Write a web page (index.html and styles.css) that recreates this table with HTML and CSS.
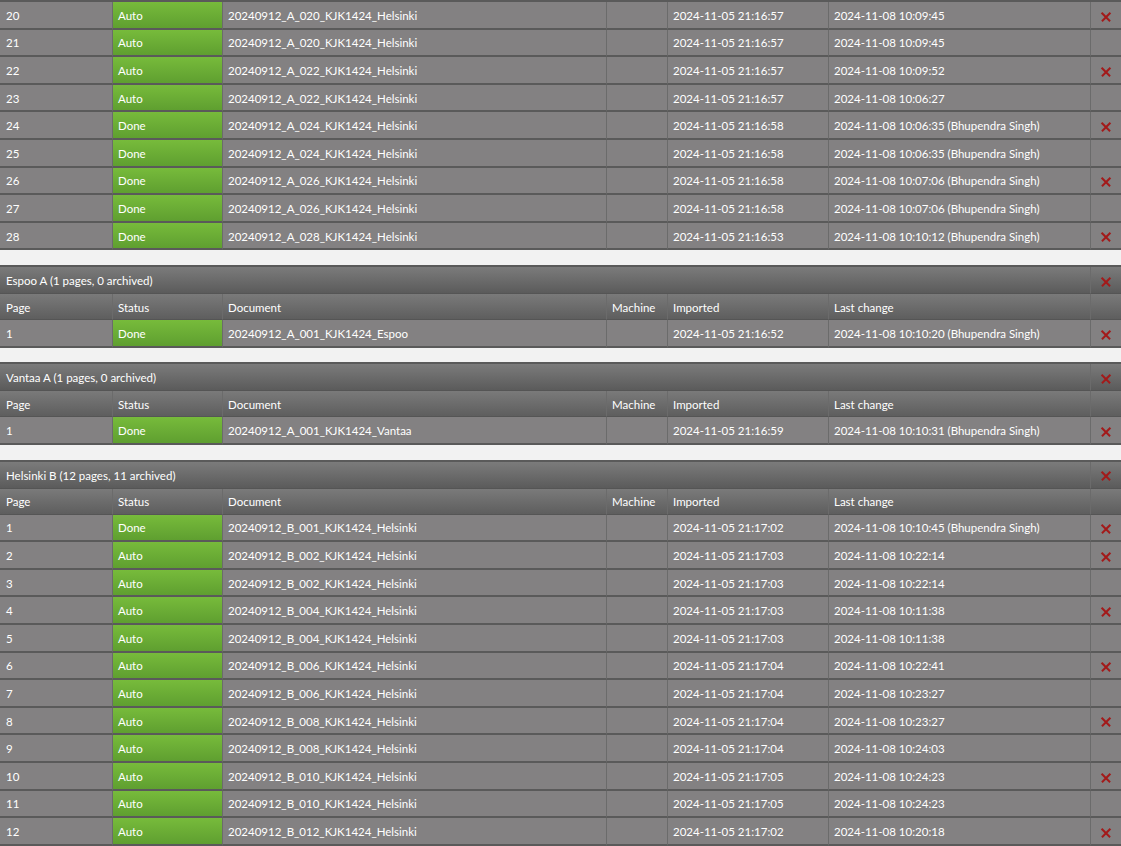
FILE: index.html
```html
<!DOCTYPE html>
<html>
<head>
<meta charset="utf-8">
<link rel="stylesheet" href="styles.css">
</head>
<body>
<table class="grid">
<colgroup><col class="c-page"><col class="c-status"><col class="c-doc"><col class="c-mach"><col class="c-imp"><col class="c-last"><col class="c-del"></colgroup>
<tbody>
<tr><td>20</td><td class="st">Auto</td><td>20240912_A_020_KJK1424_Helsinki</td><td></td><td>2024-11-05 21:16:57</td><td>2024-11-08 10:09:45</td><td class="del"><span class="x"></span></td></tr>
<tr><td>21</td><td class="st">Auto</td><td>20240912_A_020_KJK1424_Helsinki</td><td></td><td>2024-11-05 21:16:57</td><td>2024-11-08 10:09:45</td><td class="del"></td></tr>
<tr><td>22</td><td class="st">Auto</td><td>20240912_A_022_KJK1424_Helsinki</td><td></td><td>2024-11-05 21:16:57</td><td>2024-11-08 10:09:52</td><td class="del"><span class="x"></span></td></tr>
<tr><td>23</td><td class="st">Auto</td><td>20240912_A_022_KJK1424_Helsinki</td><td></td><td>2024-11-05 21:16:57</td><td>2024-11-08 10:06:27</td><td class="del"></td></tr>
<tr><td>24</td><td class="st">Done</td><td>20240912_A_024_KJK1424_Helsinki</td><td></td><td>2024-11-05 21:16:58</td><td>2024-11-08 10:06:35 (Bhupendra Singh)</td><td class="del"><span class="x"></span></td></tr>
<tr><td>25</td><td class="st">Done</td><td>20240912_A_024_KJK1424_Helsinki</td><td></td><td>2024-11-05 21:16:58</td><td>2024-11-08 10:06:35 (Bhupendra Singh)</td><td class="del"></td></tr>
<tr><td>26</td><td class="st">Done</td><td>20240912_A_026_KJK1424_Helsinki</td><td></td><td>2024-11-05 21:16:58</td><td>2024-11-08 10:07:06 (Bhupendra Singh)</td><td class="del"><span class="x"></span></td></tr>
<tr><td>27</td><td class="st">Done</td><td>20240912_A_026_KJK1424_Helsinki</td><td></td><td>2024-11-05 21:16:58</td><td>2024-11-08 10:07:06 (Bhupendra Singh)</td><td class="del"></td></tr>
<tr><td>28</td><td class="st">Done</td><td>20240912_A_028_KJK1424_Helsinki</td><td></td><td>2024-11-05 21:16:53</td><td>2024-11-08 10:10:12 (Bhupendra Singh)</td><td class="del"><span class="x"></span></td></tr>
</tbody>
</table>

<table class="grid">
<colgroup><col class="c-page"><col class="c-status"><col class="c-doc"><col class="c-mach"><col class="c-imp"><col class="c-last"><col class="c-del"></colgroup>
<thead>
<tr class="title"><th colspan="6">Espoo A (1 pages, 0 archived)</th><th class="del"><span class="x"></span></th></tr>
<tr class="head"><th>Page</th><th>Status</th><th>Document</th><th>Machine</th><th>Imported</th><th>Last change</th><th></th></tr>
</thead>
<tbody>
<tr><td>1</td><td class="st">Done</td><td>20240912_A_001_KJK1424_Espoo</td><td></td><td>2024-11-05 21:16:52</td><td>2024-11-08 10:10:20 (Bhupendra Singh)</td><td class="del"><span class="x"></span></td></tr>
</tbody>
</table>

<table class="grid">
<colgroup><col class="c-page"><col class="c-status"><col class="c-doc"><col class="c-mach"><col class="c-imp"><col class="c-last"><col class="c-del"></colgroup>
<thead>
<tr class="title"><th colspan="6">Vantaa A (1 pages, 0 archived)</th><th class="del"><span class="x"></span></th></tr>
<tr class="head"><th>Page</th><th>Status</th><th>Document</th><th>Machine</th><th>Imported</th><th>Last change</th><th></th></tr>
</thead>
<tbody>
<tr><td>1</td><td class="st">Done</td><td>20240912_A_001_KJK1424_Vantaa</td><td></td><td>2024-11-05 21:16:59</td><td>2024-11-08 10:10:31 (Bhupendra Singh)</td><td class="del"><span class="x"></span></td></tr>
</tbody>
</table>

<table class="grid">
<colgroup><col class="c-page"><col class="c-status"><col class="c-doc"><col class="c-mach"><col class="c-imp"><col class="c-last"><col class="c-del"></colgroup>
<thead>
<tr class="title"><th colspan="6">Helsinki B (12 pages, 11 archived)</th><th class="del"><span class="x"></span></th></tr>
<tr class="head"><th>Page</th><th>Status</th><th>Document</th><th>Machine</th><th>Imported</th><th>Last change</th><th></th></tr>
</thead>
<tbody>
<tr><td>1</td><td class="st">Done</td><td>20240912_B_001_KJK1424_Helsinki</td><td></td><td>2024-11-05 21:17:02</td><td>2024-11-08 10:10:45 (Bhupendra Singh)</td><td class="del"><span class="x"></span></td></tr>
<tr><td>2</td><td class="st">Auto</td><td>20240912_B_002_KJK1424_Helsinki</td><td></td><td>2024-11-05 21:17:03</td><td>2024-11-08 10:22:14</td><td class="del"><span class="x"></span></td></tr>
<tr><td>3</td><td class="st">Auto</td><td>20240912_B_002_KJK1424_Helsinki</td><td></td><td>2024-11-05 21:17:03</td><td>2024-11-08 10:22:14</td><td class="del"></td></tr>
<tr><td>4</td><td class="st">Auto</td><td>20240912_B_004_KJK1424_Helsinki</td><td></td><td>2024-11-05 21:17:03</td><td>2024-11-08 10:11:38</td><td class="del"><span class="x"></span></td></tr>
<tr><td>5</td><td class="st">Auto</td><td>20240912_B_004_KJK1424_Helsinki</td><td></td><td>2024-11-05 21:17:03</td><td>2024-11-08 10:11:38</td><td class="del"></td></tr>
<tr><td>6</td><td class="st">Auto</td><td>20240912_B_006_KJK1424_Helsinki</td><td></td><td>2024-11-05 21:17:04</td><td>2024-11-08 10:22:41</td><td class="del"><span class="x"></span></td></tr>
<tr><td>7</td><td class="st">Auto</td><td>20240912_B_006_KJK1424_Helsinki</td><td></td><td>2024-11-05 21:17:04</td><td>2024-11-08 10:23:27</td><td class="del"></td></tr>
<tr><td>8</td><td class="st">Auto</td><td>20240912_B_008_KJK1424_Helsinki</td><td></td><td>2024-11-05 21:17:04</td><td>2024-11-08 10:23:27</td><td class="del"><span class="x"></span></td></tr>
<tr><td>9</td><td class="st">Auto</td><td>20240912_B_008_KJK1424_Helsinki</td><td></td><td>2024-11-05 21:17:04</td><td>2024-11-08 10:24:03</td><td class="del"></td></tr>
<tr><td>10</td><td class="st">Auto</td><td>20240912_B_010_KJK1424_Helsinki</td><td></td><td>2024-11-05 21:17:05</td><td>2024-11-08 10:24:23</td><td class="del"><span class="x"></span></td></tr>
<tr><td>11</td><td class="st">Auto</td><td>20240912_B_010_KJK1424_Helsinki</td><td></td><td>2024-11-05 21:17:05</td><td>2024-11-08 10:24:23</td><td class="del"></td></tr>
<tr><td>12</td><td class="st">Auto</td><td>20240912_B_012_KJK1424_Helsinki</td><td></td><td>2024-11-05 21:17:02</td><td>2024-11-08 10:20:18</td><td class="del"><span class="x"></span></td></tr>
</tbody>
</table>
</body>
</html>
```

FILE: styles.css
```css
html, body {
  margin: 0;
  padding: 0;
  background: #f2f2f2;
}
body {
  font-family: Lato, "Open Sans", sans-serif;
  font-size: 11.5px;
  color: #fff;
}
.grid {
  width: 1121px;
  table-layout: fixed;
  border-collapse: separate;
  border-spacing: 0;
  border-top: 2px solid #5a5a5a;
  margin-bottom: 14.7px;
}
.c-page { width: 112px; }
.c-status { width: 110px; }
.c-doc { width: 384px; }
.c-mach { width: 61px; }
.c-imp { width: 161px; }
.c-last { width: 262px; }
.c-del { width: 31px; }

.grid td, .grid th {
  box-sizing: border-box;
  padding: 1px 0 0 5px;
  line-height: 15px;
  text-align: left;
  font-weight: normal;
  white-space: nowrap;
  overflow: hidden;
  border-bottom: 2px solid #5a5a5a;
  border-left: 1px solid #6b6b6b;
  vertical-align: middle;
}
.grid td:first-child, .grid th:first-child {
  padding-left: 6px;
  border-left: 0;
}
.grid td {
  height: 27.6px;
  background: #838182;
}
.grid td.st {
  background: linear-gradient(#77bb3b, #5f9f30);
}
.grid tr.title th {
  height: 27px;
  background: linear-gradient(#7b7b7b, #5b5b5b);
  border-bottom: 1px solid #555;
}
.grid tr.head th {
  height: 26px;
  background: linear-gradient(#7a7a7a, #5e5e5e);
  border-bottom: 1px solid #555;
}
.grid .del {
  padding: 0;
  text-align: center;
}
.x {
  display: inline-block;
  width: 10px;
  height: 10px;
  position: relative;
  vertical-align: middle;
}
.x::before, .x::after {
  content: "";
  position: absolute;
  left: -1px;
  top: 4.25px;
  width: 12px;
  height: 1.5px;
  background: #a31a1a;
  transform: rotate(45deg);
}
.x::after { transform: rotate(-45deg); }
```
